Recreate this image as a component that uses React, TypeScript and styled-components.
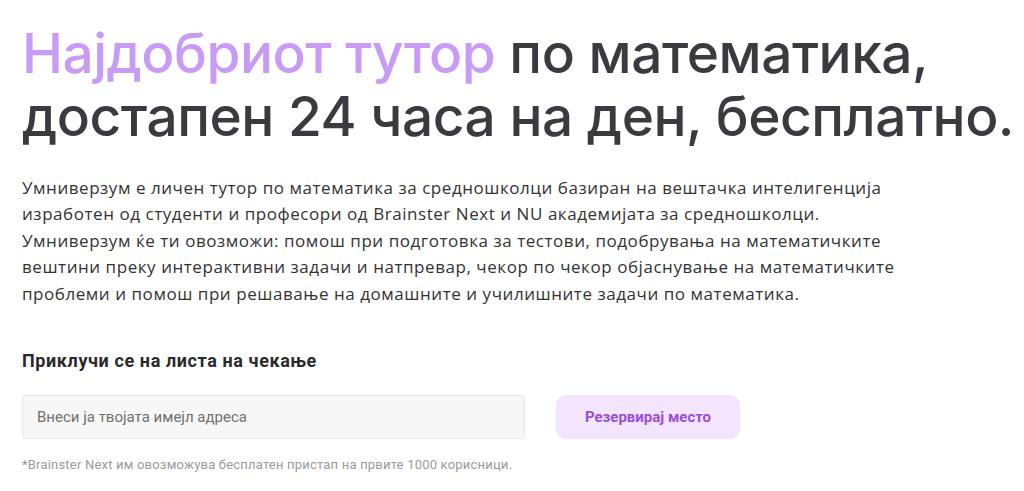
import React from "react";
import styled, { createGlobalStyle } from "styled-components";

const GlobalStyle = createGlobalStyle`
  html, body {
    margin: 0;
    padding: 0;
    background: #ffffff;
  }
  * {
    box-sizing: border-box;
  }
`;

const Page = styled.main`
  padding: 22px 22px 0 22px;
  width: 1024px;
  height: 491px;
  overflow: hidden;
`;

const Headline = styled.h1`
  margin: 0;
  font-family: Inter, "Noto Sans", sans-serif;
  font-size: 55px;
  font-weight: 500;
  line-height: 63px;
  letter-spacing: -0.5px;
  white-space: nowrap;
  color: #3b3a40;
`;

const Accent = styled.span`
  color: #c89bf6;
`;

const Lead = styled.p`
  margin: 27px 0 0 0;
  font-family: "Open Sans", sans-serif;
  font-size: 17px;
  line-height: 26.4px;
  letter-spacing: 0.55px;
  white-space: nowrap;
  color: #333335;
`;

const Waitlist = styled.section`
  margin-top: 43px;
  display: flex;
  flex-direction: column;
`;

const WaitlistTitle = styled.h2`
  margin: 0;
  font-family: Roboto, "Liberation Sans", sans-serif;
  font-size: 18px;
  font-weight: 700;
  letter-spacing: 0.6px;
  color: #2a2a2c;
`;

const Form = styled.form`
  display: flex;
  align-items: center;
  gap: 31px;
  margin-top: 24px;
`;

const EmailInput = styled.input`
  width: 503px;
  height: 44px;
  padding: 0 14px;
  background: #f7f7f7;
  border: 1px solid #e6e6e6;
  border-radius: 4px;
  font-family: Roboto, "Liberation Sans", sans-serif;
  font-size: 15px;
  color: #333;
  outline: none;

  &::placeholder {
    color: #707070;
  }
`;

const ReserveButton = styled.button`
  width: 184px;
  height: 44px;
  border: none;
  border-radius: 10px;
  background: #f3e5fd;
  color: #9a4fd6;
  font-family: Roboto, "Liberation Sans", sans-serif;
  font-size: 15px;
  font-weight: 700;
  cursor: pointer;
`;

const Footnote = styled.p`
  margin: 18px 0 0 0;
  font-family: Roboto, "Liberation Sans", sans-serif;
  font-size: 13px;
  letter-spacing: 0.2px;
  color: #9a9a9a;
`;

const leadLines = [
  "Умниверзум е личен тутор по математика за средношколци базиран на вештачка интелигенција",
  "изработен од студенти и професори од Brainster Next и NU академијата за средношколци.",
  "Умниверзум ќе ти овозможи: помош при подготовка за тестови, подобрувања на математичките",
  "вештини преку интерактивни задачи и натпревар, чекор по чекор објаснување на математичките",
  "проблеми и помош при решавање на домашните и училишните задачи по математика.",
];

const App: React.FC = () => {
  return (
    <>
      <GlobalStyle />
      <Page>
        <Headline>
          <Accent>Најдобриот тутор</Accent> по математика,
          <br />
          достапен 24 часа на ден, бесплатно.
        </Headline>
        <Lead>
          {leadLines.map((line, i) => (
            <React.Fragment key={i}>
              {line}
              {i < leadLines.length - 1 && <br />}
            </React.Fragment>
          ))}
        </Lead>
        <Waitlist>
          <WaitlistTitle>Приклучи се на листа на чекање</WaitlistTitle>
          <Form onSubmit={(e) => e.preventDefault()}>
            <EmailInput type="email" placeholder="Внеси ја твојата имејл адреса" />
            <ReserveButton type="submit">Резервирај место</ReserveButton>
          </Form>
          <Footnote>
            *Brainster Next им овозможува бесплатен пристап на првите 1000
            корисници.
          </Footnote>
        </Waitlist>
      </Page>
    </>
  );
};

export default App;
